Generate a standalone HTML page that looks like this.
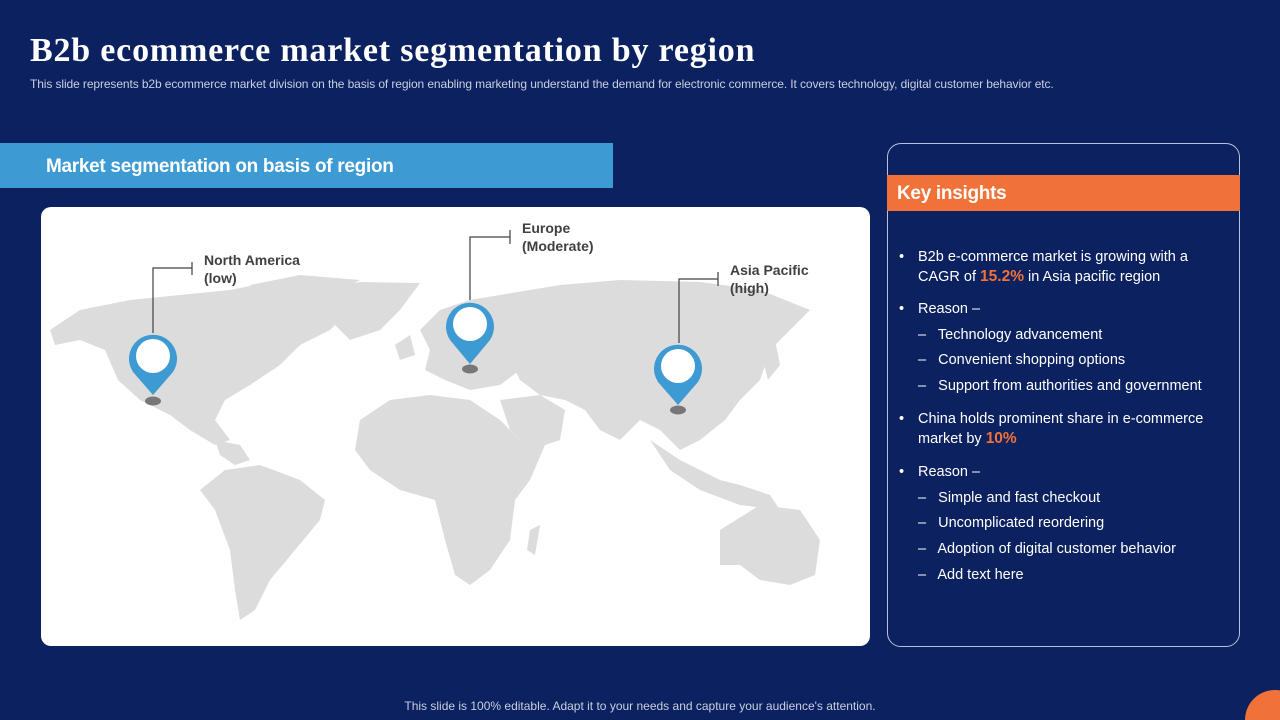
<!DOCTYPE html>
<html><head><meta charset="utf-8"><style>
html,body{margin:0;width:1280px;height:720px;overflow:hidden}
body{background:#0b2160;font-family:"Liberation Sans",sans-serif}
#w{position:relative;width:1280px;height:720px;overflow:hidden;background:#0b2160}
.a{position:absolute}
h1{position:absolute;left:30px;top:32px;margin:0;font-family:"Liberation Serif",serif;font-weight:bold;font-size:34px;color:#fff;letter-spacing:0.8px;white-space:nowrap}
.sub{left:30px;top:77px;font-size:12px;color:#c9cfe0;letter-spacing:-0.1px;white-space:nowrap}
.bar{left:0;top:143px;width:613px;height:45px;background:#3d9ad3}
.bar span{position:absolute;left:46px;top:13px;color:#fff;font-weight:bold;font-size:19px;letter-spacing:-0.3px}
.map{left:41px;top:207px;width:829px;height:439px;background:#fff;border-radius:10px;overflow:hidden}
.lbl{font-weight:bold;font-size:14px;color:#404040;line-height:18px}
.panel{left:887px;top:143px;width:351px;height:502px;border:1px solid #b8c2dc;border-radius:14px}
.kh{left:887px;top:175px;width:353px;height:36px;background:#f07238}
.kh span{position:absolute;left:10px;top:8px;color:#fff;font-weight:bold;font-size:19px;letter-spacing:-0.3px}
.t{color:#fff;font-size:14.5px;line-height:19px;position:absolute}
.o{color:#f07238;font-weight:bold;font-size:15.5px}
.foot{left:0;width:1280px;top:699px;text-align:center;font-size:12px;color:#c9cfe0}
</style></head><body><div id="w">
<h1>B2b ecommerce market segmentation by region</h1>
<div class="a sub">This slide represents b2b ecommerce market division on the basis of region enabling marketing understand the demand for electronic commerce. It covers technology, digital customer behavior etc.</div>
<div class="a bar"><span>Market segmentation on basis of region</span></div>
<div class="a map">
<svg width="829" height="439" viewBox="41 207 829 439">
<g fill="#dcdcdc">
<path d="M50 330 L80 310 L130 300 L180 295 L230 290 L270 282 L330 280 L360 290 L350 310 L330 330 L300 345 L280 365 L250 385 L225 400 L215 420 L230 440 L215 445 L190 430 L170 415 L140 400 L118 380 L105 350 L80 340 L55 345 Z"/>
<path d="M250 285 L300 275 L360 280 L330 296 L290 300 Z"/>
<path d="M320 290 L360 282 L420 283 L400 310 L380 330 L350 340 L330 320 Z"/>
<path d="M215 440 L240 445 L250 460 L235 465 L220 455 Z"/>
<path d="M225 470 L260 465 L300 480 L325 500 L320 520 L295 550 L270 580 L255 610 L240 620 L235 590 L230 550 L215 510 L200 490 Z"/>
<path d="M420 330 L440 310 L470 300 L500 295 L510 320 L505 350 L520 370 L500 385 L470 390 L445 380 L425 370 L430 350 Z"/>
<path d="M395 345 L410 335 L415 355 L400 360 Z"/>
<path d="M500 295 L560 285 L620 280 L700 282 L760 290 L810 310 L790 330 L770 350 L760 380 L740 400 L725 420 L700 440 L680 450 L660 430 L640 420 L620 440 L600 430 L585 410 L565 400 L540 395 L520 380 L505 350 Z"/>
<path d="M760 350 L775 340 L780 365 L768 380 Z"/>
<path d="M360 420 L390 400 L430 395 L470 400 L500 420 L520 440 L545 445 L530 480 L515 500 L510 540 L490 570 L470 585 L455 575 L445 540 L435 500 L400 490 L370 470 L355 450 Z"/>
<path d="M530 530 L540 525 L535 555 L527 550 Z"/>
<path d="M500 400 L540 395 L565 410 L560 440 L530 450 L510 430 Z"/>
<path d="M650 440 L680 460 L700 470 L720 480 L740 485 L770 495 L780 510 L740 505 L700 490 L670 470 Z"/>
<path d="M720 530 L760 505 L800 510 L820 540 L815 575 L790 585 L760 580 L740 565 L720 565 Z"/>
</g>
<g stroke="#404040" stroke-width="1.2" fill="none">
<path d="M153 333 V268 H192 M192 262 V275"/>
<path d="M470 300 V237 H510 M510 230 V244"/>
<path d="M679 343 V279 H718 M718 272 V286"/>
</g>
<g>
<ellipse cx="153" cy="401" rx="8" ry="4.5" fill="#777"/>
<path d="M153 395 L133 372 A24 24 0 1 1 173 372 Z" fill="#3d9ad3"/>
<circle cx="153" cy="356" r="17" fill="#fff"/>
<ellipse cx="470" cy="369" rx="8" ry="4.5" fill="#777"/>
<path d="M470 364 L450 340 A24 24 0 1 1 490 340 Z" fill="#3d9ad3"/>
<circle cx="470" cy="324" r="17" fill="#fff"/>
<ellipse cx="678" cy="410" rx="8" ry="4.5" fill="#777"/>
<path d="M678 405 L658 382 A24 24 0 1 1 698 382 Z" fill="#3d9ad3"/>
<circle cx="678" cy="366" r="17" fill="#fff"/>
</g>
</svg>
</div>
<div class="a lbl" style="left:204px;top:251px">North America<br>(low)</div>
<div class="a lbl" style="left:522px;top:219px">Europe<br>(Moderate)</div>
<div class="a lbl" style="left:730px;top:261px">Asia Pacific<br>(high)</div>
<div class="a panel"></div>
<div class="a kh"><span>Key insights</span></div>
<div class="t" style="left:899px;top:248px">•</div>
<div class="t" style="left:918px;top:248px">B2b e-commerce market is growing with a<br>CAGR of <span class="o">15.2%</span> in Asia pacific region</div>
<div class="t" style="left:899px;top:300px">•</div><div class="t" style="left:918px;top:300px">Reason –</div>
<div class="t" style="left:918px;top:326px">–&nbsp;&nbsp; Technology advancement</div>
<div class="t" style="left:918px;top:351px">–&nbsp;&nbsp; Convenient shopping options</div>
<div class="t" style="left:918px;top:377px">–&nbsp;&nbsp; Support from authorities and government</div>
<div class="t" style="left:899px;top:410px">•</div>
<div class="t" style="left:918px;top:410px">China holds prominent share in e-commerce<br>market by <span class="o">10%</span></div>
<div class="t" style="left:899px;top:463px">•</div><div class="t" style="left:918px;top:463px">Reason –</div>
<div class="t" style="left:918px;top:489px">–&nbsp;&nbsp; Simple and fast checkout</div>
<div class="t" style="left:918px;top:514px">–&nbsp;&nbsp; Uncomplicated reordering</div>
<div class="t" style="left:918px;top:540px">–&nbsp;&nbsp; Adoption of digital customer behavior</div>
<div class="t" style="left:918px;top:566px">–&nbsp;&nbsp; Add text here</div>
<div class="a foot">This slide is 100% editable. Adapt it to your needs and capture your audience's attention.</div>
<div class="a" style="left:1245px;top:690px;width:60px;height:60px;border-radius:50%;background:#f07238"></div>
</div></body></html>
